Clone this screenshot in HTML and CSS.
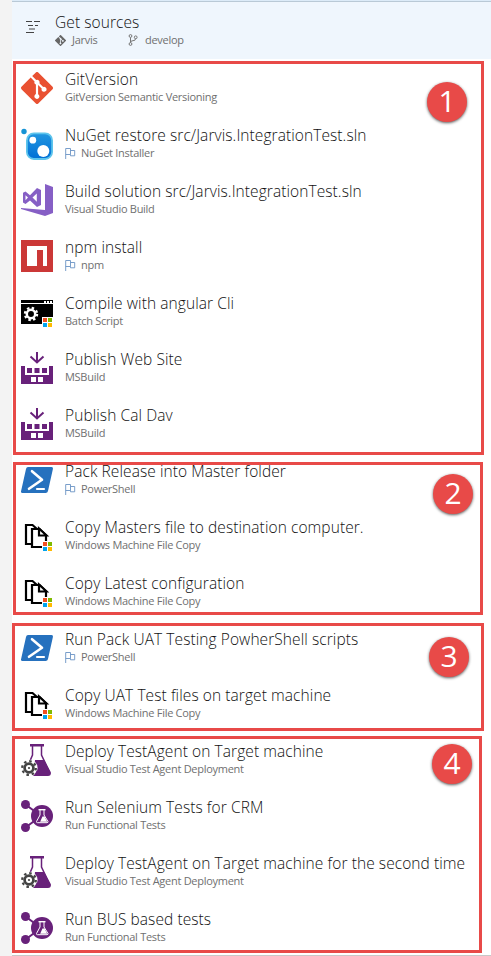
FILE: index.html
```
<!DOCTYPE html>
<html lang="en">
<head>
<meta charset="utf-8">
<title>Build steps</title>
<link rel="stylesheet" href="styles.css">
</head>
<body>
<svg class="defs" width="0" height="0">
  <symbol id="flag" viewBox="0 0 11 12"><path d="M.7 12V1.500H5.500V7.500H.7M5.500 3.500H9.700V8.800H5.500V7.500" fill="none" stroke="#6a93c4" stroke-width=".9"/></symbol>
  <symbol id="win" viewBox="0 0 9 9"><path d="M0 0h4v4H0z" fill="#f25022"/><path d="M5 0h4v4H5z" fill="#7fba00"/><path d="M0 5h4v4H0z" fill="#00a4ef"/><path d="M5 5h4v4H5z" fill="#ffb900"/></symbol>
  <symbol id="git" viewBox="0 0 32 32"><path d="M14.6.7 11.2 4l4 4a2.5 2.5 0 0 1 3.2 3.2l3.8 3.8a2.5 2.5 0 1 1-1.5 1.5l-3.6-3.6v9.3a2.5 2.5 0 1 1-2.2-.1v-9.5a2.5 2.5 0 0 1-1.3-3.2L9.7 5.5.7 14.5a2 2 0 0 0 0 2.9l13.9 13.9a2 2 0 0 0 2.9 0l13.8-13.8a2 2 0 0 0 0-2.9L17.5.7a2 2 0 0 0-2.9 0z" fill="currentColor"/></symbol>
  <symbol id="nuget" viewBox="0 0 32 32"><defs><linearGradient id="ng" x1="0" y1="0" x2="0" y2="1"><stop offset="0" stop-color="#2196e0"/><stop offset="1" stop-color="#006fd6"/></linearGradient></defs><circle cx="3" cy="3.500" r="2.700" fill="#1593d5"/><rect x="5.900" y="5.400" width="25.200" height="25.600" rx="7" fill="url(#ng)" stroke="#5dc4ec" stroke-width="1.800"/><circle cx="11.800" cy="12.200" r="3.400" fill="#fff"/><circle cx="22.300" cy="23" r="6" fill="#fff"/></symbol>
  <symbol id="vs" viewBox="0 0 32 32"><path d="M24 0l8 3v26l-8 3L0 25v-1l24 2z" fill="#865fc5"/><path d="M16 4l4 2v15l-4 2-7-6.500L4.500 20 2 18.500V8.800L4.500 7.500 9 11.200zM15.800 9.500L11.500 13.600l4.300 4.200zM4.500 11.200v5l2.500-2.600z" fill="#865fc5" fill-rule="evenodd"/></symbol>
  <symbol id="npm" viewBox="0 0 32 32"><path d="M0 0h32v32H0z" fill="#cb3837"/><path d="M6 6h20v20h-4V10h-6v16H6z" fill="#fff"/></symbol>
  <symbol id="batch" viewBox="0 0 32 32"><path d="M0 3h32v3H0zM0 7h32v20H0z" fill="#000"/><path d="M23 4h2v2h-2zM26 4h2v2h-2zM29 4h2v2h-2z" fill="#fff"/><circle cx="10" cy="17" r="4.200" fill="none" stroke="#fff" stroke-width="2.500"/><circle cx="10" cy="17" r="6" fill="none" stroke="#fff" stroke-width="2.400" stroke-dasharray="2.400 2.310"/><path d="M21 20h11v12H21z" fill="#fff"/><use href="#win" x="22" y="21" width="9" height="9"/></symbol>
  <symbol id="msb" viewBox="0 0 32 32"><path d="M0 14h4v9h24v-9h4v18H0z" fill="#68217a"/><path d="M6 16h5v5H6zM13.500 16h5v5h-5zM21 16h5v5h-5z" fill="#68217a"/><path d="M10 25h5v5h-5zM17 25h5v5h-5z" fill="#fff"/><path d="M16 0v10M9.500 4.500L16 10.500 22.500 4.500" fill="none" stroke="#68217a" stroke-width="2"/></symbol>
  <symbol id="ps" viewBox="0 0 32 32"><path d="M7 3h23.300q2 0 1.600 2L27 27q-.4 2-2.400 2H1.500q-1.900 0-1.400-2L5 5q.4-2 2-2z" fill="#2671be"/><path d="M11 7.200l10 8.600L8 24.800" fill="none" stroke="#fff" stroke-width="2.600" stroke-linecap="round" stroke-linejoin="round"/><path d="M16 25h7" stroke="#fff" stroke-width="2.200" stroke-linecap="round"/></symbol>
  <symbol id="copy" viewBox="0 0 32 32"><path d="M11 24H5V5h6.500l4.500 4" fill="none" stroke="#000" stroke-width="2.200"/><path d="M11 9h7.500l6.500 6.500V27H11z" fill="#fff" stroke="#000" stroke-width="2.200"/><path d="M18 8.500v7h7.500z" fill="#fff" stroke="#000" stroke-width="2.200"/><path d="M21 21h11v11H21z" fill="#fff"/><use href="#win" x="22" y="22" width="9" height="9"/></symbol>
  <symbol id="flask" viewBox="0 0 32 32"><path d="M9 0h14v2.500H9z" fill="#68217a"/><path d="M11.500 2v9L5 26M20.500 2v9l8 17" fill="none" stroke="#68217a" stroke-width="1.500"/><path d="M14 16h9.200L30 28.500Q30 32 27 32H12z" fill="#68217a"/><circle cx="8" cy="24" r="8.600" fill="#fff"/><path d="M15.500 27h3v5H13z" fill="#68217a"/><circle cx="8" cy="24" r="4.400" fill="none" stroke="#444" stroke-width="2.700"/><circle cx="8" cy="24" r="6.800" fill="none" stroke="#444" stroke-width="2.300" stroke-dasharray="2.500 2.840"/><circle cx="8" cy="24" r="1.100" fill="#444"/></symbol>
  <symbol id="tests" viewBox="0 0 32 32"><path d="M4.500 4.500L20 16 4.500 27.500" fill="none" stroke="#68217a" stroke-width="2"/><circle cx="4.500" cy="4.500" r="4.500" fill="#68217a"/><circle cx="4.500" cy="27.500" r="4.500" fill="#68217a"/><circle cx="21" cy="16" r="11" fill="#68217a"/><path d="M17.500 9.700h7" stroke="#fff" stroke-width="1.400"/><path d="M19 10v5l-3.500 6.500q-.2 1.200 1 1.200h9.500q1.200 0 1-1.200L23 15v-5" fill="none" stroke="#fff" stroke-width="1"/><path d="M21.500 16.500h2l2.700 5.300h-7z" fill="#fff"/></symbol>
</svg>
<main class="panel">
  <header class="sources">
    <svg class="lines" viewBox="0 0 14 12"><path d="M0 .5h6M8 .5h6M2 4.500h5M9 4.500h3M3 8h6M0 11.500h8" stroke="#444" fill="none"/></svg>
    <div>
      <h1 class="title">Get sources</h1>
      <div class="meta">
        <svg class="mini" color="#666"><use href="#git"/></svg><span class="repo">Jarvis</span>
        <svg class="branch" viewBox="0 0 10 12" fill="none" stroke="#777"><circle cx="2.500" cy="2" r="1.400"/><circle cx="2.500" cy="10" r="1.400"/><circle cx="7.700" cy="3.300" r="1.400"/><path d="M2.500 3.500v5M7.500 4.800Q7.500 6.700 5 6.700T2.500 8.500"/></svg><span>develop</span>
      </div>
    </div>
  </header>
  <ol class="steps">
    <li class="step"><svg class="icon" color="#e95132"><use href="#git"/></svg><div><h2 class="title">GitVersion</h2><p class="meta">GitVersion Semantic Versioning</p></div></li>
    <li class="step"><svg class="icon"><use href="#nuget"/></svg><div><h2 class="title">NuGet restore src/Jarvis.IntegrationTest.sln</h2><p class="meta"><svg class="flag"><use href="#flag"/></svg>NuGet Installer</p></div></li>
    <li class="step"><svg class="icon"><use href="#vs"/></svg><div><h2 class="title">Build solution src/Jarvis.IntegrationTest.sln</h2><p class="meta">Visual Studio Build</p></div></li>
    <li class="step"><svg class="icon"><use href="#npm"/></svg><div><h2 class="title">npm install</h2><p class="meta"><svg class="flag"><use href="#flag"/></svg>npm</p></div></li>
    <li class="step"><svg class="icon low"><use href="#batch"/></svg><div><h2 class="title">Compile with angular Cli</h2><p class="meta">Batch Script</p></div></li>
    <li class="step"><svg class="icon"><use href="#msb"/></svg><div><h2 class="title">Publish Web Site</h2><p class="meta">MSBuild</p></div></li>
    <li class="step"><svg class="icon"><use href="#msb"/></svg><div><h2 class="title">Publish Cal Dav</h2><p class="meta">MSBuild</p></div></li>
    <li class="step"><svg class="icon"><use href="#ps"/></svg><div><h2 class="title">Pack Release into Master folder</h2><p class="meta"><svg class="flag"><use href="#flag"/></svg>PowerShell</p></div></li>
    <li class="step"><svg class="icon"><use href="#copy"/></svg><div><h2 class="title">Copy Masters file to destination computer.</h2><p class="meta">Windows Machine File Copy</p></div></li>
    <li class="step"><svg class="icon"><use href="#copy"/></svg><div><h2 class="title">Copy Latest configuration</h2><p class="meta">Windows Machine File Copy</p></div></li>
    <li class="step"><svg class="icon"><use href="#ps"/></svg><div><h2 class="title">Run Pack UAT Testing PowherShell scripts</h2><p class="meta"><svg class="flag"><use href="#flag"/></svg>PowerShell</p></div></li>
    <li class="step"><svg class="icon"><use href="#copy"/></svg><div><h2 class="title">Copy UAT Test files on target machine</h2><p class="meta">Windows Machine File Copy</p></div></li>
    <li class="step"><svg class="icon"><use href="#flask"/></svg><div><h2 class="title">Deploy TestAgent on Target machine</h2><p class="meta">Visual Studio Test Agent Deployment</p></div></li>
    <li class="step"><svg class="icon"><use href="#tests"/></svg><div><h2 class="title">Run Selenium Tests for CRM</h2><p class="meta">Run Functional Tests</p></div></li>
    <li class="step"><svg class="icon"><use href="#flask"/></svg><div><h2 class="title">Deploy TestAgent on Target machine for the second time</h2><p class="meta">Visual Studio Test Agent Deployment</p></div></li>
    <li class="step"><svg class="icon"><use href="#tests"/></svg><div><h2 class="title">Run BUS based tests</h2><p class="meta">Run Functional Tests</p></div></li>
  </ol>
</main>
<div class="frame f1"><span class="badge">1</span></div>
<div class="frame f2"><span class="badge">2</span></div>
<div class="frame f3"><span class="badge">3</span></div>
<div class="frame f4"><span class="badge">4</span></div>
</body>
</html>
```
FILE: styles.css
```
* { box-sizing: border-box; margin: 0; padding: 0; }
body { position: relative; width: 491px; height: 956px; overflow: hidden; padding-left: 12px; background: #f3f3f3; font-family: "Open Sans", "Noto Sans", sans-serif; }
.defs { position: absolute; }
.panel { height: 956px; background: #fff; border-bottom: 1px solid #c8c8c8; }
.sources { display: flex; height: 59px; padding: 12px 0 0 14px; background: #eff6fd; box-shadow: -12px 0 0 #f3f3f3, inset 0 1px #dcebf8, inset 0 2px #b9c9d6; }
.sources > div { margin-left: 15px; }
.lines { width: 14px; height: 12px; margin-top: 9px; }
.title { height: 20px; font-size: 15.5px; line-height: 20px; font-weight: 330; color: #111; white-space: nowrap; letter-spacing: .08px; }
.meta { display: flex; align-items: center; height: 16px; font-size: 11px; line-height: 16px; color: #707070; white-space: nowrap; letter-spacing: -.28px; }
.mini { width: 11px; height: 11px; margin-right: 6px; }
.repo { width: 56px; }
.branch { width: 10px; height: 12px; margin-right: 7px; }
.flag { width: 11px; height: 12px; margin-right: 5px; }
.steps { list-style: none; padding-top: 1px; }
.step { display: flex; height: 56px; padding: 9px 0 0 9px; }
.step > div { margin-left: 12px; }
.icon { flex: none; width: 32px; height: 32px; margin-top: 3px; }
.icon.low { margin-top: 4px; }
.frame { position: absolute; border: 3px solid #e84a48; }
.f1 { left: 13px; top: 61px; width: 471px; height: 394px; }
.f2 { left: 13px; top: 462px; width: 470px; height: 153px; }
.f3 { left: 12px; top: 623px; width: 472px; height: 108px; }
.f4 { left: 12px; top: 736px; width: 470px; height: 217px; }
.badge { position: absolute; width: 40px; height: 40px; border-radius: 50%; background: #e84a48; box-shadow: 0 1px 3px rgba(0,0,0,.65); color: #fff; font: 30px/38px "Open Sans", sans-serif; text-align: center; }
.f1 .badge { left: 411px; top: 18px; }
.f2 .badge { left: 417px; top: 9px; }
.f3 .badge { left: 414px; top: 11px; }
.f4 .badge { left: 417px; top: 5px; }
```
